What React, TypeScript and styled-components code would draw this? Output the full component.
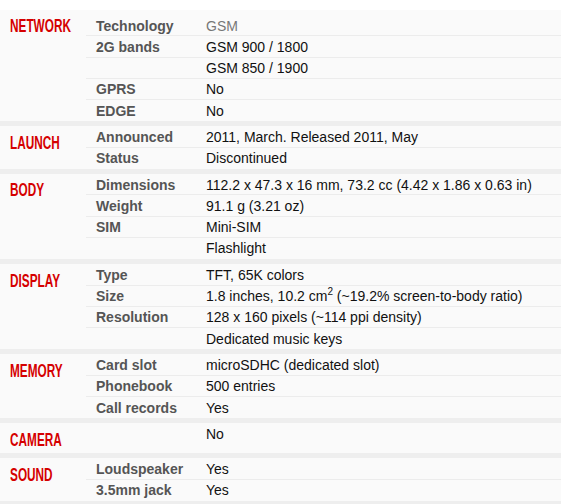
import React from 'react';
import styled, { createGlobalStyle } from 'styled-components';

const GlobalStyle = createGlobalStyle`
  body {
    margin: 0;
    background: #fff;
    font-family: "Liberation Sans", Arial, sans-serif;
  }
`;

const SpecsList = styled.div`
  padding-top: 10px;
  width: 561px;
`;

const Section = styled.div`
  display: flex;
  background: #fafafa;
  border-bottom: 5px solid #eeeeee;
`;

const Heading = styled.div`
  width: 86px;
  flex-shrink: 0;
  box-sizing: border-box;
  padding: 8.4px 10px 5.6px;
  line-height: 15px;
`;

const HeadingText = styled.span`
  display: inline-block;
  font-size: 18.6px;
  font-weight: 700;
  color: #d50000;
  transform: scaleX(0.635);
  transform-origin: left center;
  white-space: nowrap;
`;

const Rows = styled.div<{ $first?: boolean }>`
  flex: 1;
  display: flex;
  flex-direction: column;
  padding-top: ${(p) => (p.$first ? '5px' : '0')};
`;

const Row = styled.div`
  display: flex;
  box-sizing: border-box;
  min-height: 21.3px;
  padding-top: 1.5px;
  line-height: 18.8px;
  font-size: 14px;
  border-bottom: 1px solid #ececec;

  &:last-child {
    border-bottom-color: transparent;
  }
`;

const Label = styled.div`
  width: 110px;
  flex-shrink: 0;
  box-sizing: border-box;
  padding-left: 10px;
  font-weight: 700;
  color: #555;
`;

const Value = styled.div<{ $muted?: boolean }>`
  padding-left: 10px;
  color: ${(p) => (p.$muted ? '#777' : '#111')};
  white-space: nowrap;
`;

const Sup = styled.sup`
  font-size: 10px;
  line-height: 0;
`;

interface SpecRow {
  label: string;
  value: React.ReactNode;
  muted?: boolean;
}

interface SpecSection {
  title: string;
  rows: SpecRow[];
}

const specs: SpecSection[] = [
  {
    title: 'NETWORK',
    rows: [
      { label: 'Technology', value: 'GSM', muted: true },
      { label: '2G bands', value: 'GSM 900 / 1800' },
      { label: '', value: 'GSM 850 / 1900' },
      { label: 'GPRS', value: 'No' },
      { label: 'EDGE', value: 'No' },
    ],
  },
  {
    title: 'LAUNCH',
    rows: [
      { label: 'Announced', value: '2011, March. Released 2011, May' },
      { label: 'Status', value: 'Discontinued' },
    ],
  },
  {
    title: 'BODY',
    rows: [
      { label: 'Dimensions', value: '112.2 x 47.3 x 16 mm, 73.2 cc (4.42 x 1.86 x 0.63 in)' },
      { label: 'Weight', value: '91.1 g (3.21 oz)' },
      { label: 'SIM', value: 'Mini-SIM' },
      { label: '', value: 'Flashlight' },
    ],
  },
  {
    title: 'DISPLAY',
    rows: [
      { label: 'Type', value: 'TFT, 65K colors' },
      {
        label: 'Size',
        value: (
          <>
            1.8 inches, 10.2 cm<Sup>2</Sup> (~19.2% screen-to-body ratio)
          </>
        ),
      },
      { label: 'Resolution', value: '128 x 160 pixels (~114 ppi density)' },
      { label: '', value: 'Dedicated music keys' },
    ],
  },
  {
    title: 'MEMORY',
    rows: [
      { label: 'Card slot', value: 'microSDHC (dedicated slot)' },
      { label: 'Phonebook', value: '500 entries' },
      { label: 'Call records', value: 'Yes' },
    ],
  },
  {
    title: 'CAMERA',
    rows: [{ label: '', value: 'No' }],
  },
  {
    title: 'SOUND',
    rows: [
      { label: 'Loudspeaker', value: 'Yes' },
      { label: '3.5mm jack', value: 'Yes' },
    ],
  },
];

const App = () => {
  return (
    <>
      <GlobalStyle />
      <SpecsList>
        {specs.map((section, i) => (
          <Section key={section.title}>
            <Heading>
              <HeadingText>{section.title}</HeadingText>
            </Heading>
            <Rows $first={i === 0}>
              {section.rows.map((row, j) => (
                <Row key={j}>
                  <Label>{row.label}</Label>
                  <Value $muted={row.muted}>{row.value}</Value>
                </Row>
              ))}
            </Rows>
          </Section>
        ))}
      </SpecsList>
    </>
  );
};

export default App;
